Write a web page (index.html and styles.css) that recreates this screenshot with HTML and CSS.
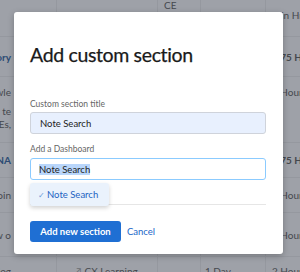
FILE: index.html
```html
<!DOCTYPE html>
<html>
<head>
<meta charset="utf-8">
<link rel="stylesheet" href="styles.css">
</head>
<body>
<div class="table">
  <div class="cell"></div>
  <div class="cell"></div>
  <div class="cell"><span class="hd">CE</span></div>
  <div class="cell"></div>
  <div class="cell"><span class="hd2">Min Hrs</span></div>

  <div class="cell c1"><span class="link">Category</span></div>
  <div class="cell"></div>
  <div class="cell"></div>
  <div class="cell"></div>
  <div class="cell c5"><span class="bold">1.75 Hrs</span></div>

  <div class="cell c1 multi"><span>Knowle</span><span>Learn te</span><span>CEs,</span></div>
  <div class="cell"></div>
  <div class="cell"></div>
  <div class="cell"></div>
  <div class="cell c5 top"><span>2 Hours</span></div>

  <div class="cell c1"><span class="link">NA</span></div>
  <div class="cell"></div>
  <div class="cell"></div>
  <div class="cell"></div>
  <div class="cell c5"><span class="bold">1.75 Hrs</span></div>

  <div class="cell c1"><span>Join</span></div>
  <div class="cell"></div>
  <div class="cell"></div>
  <div class="cell"></div>
  <div class="cell c5"><span>2 Hours</span></div>

  <div class="cell c1"><span>How o</span></div>
  <div class="cell"></div>
  <div class="cell"></div>
  <div class="cell"></div>
  <div class="cell c5"><span>2 Hours</span></div>

  <div class="cell c1 last"><span>Go to blog</span></div>
  <div class="cell c2 last"><span class="ico">&#8599;</span><span>CX Learning</span></div>
  <div class="cell last"></div>
  <div class="cell c4 last"><span>1 Day</span></div>
  <div class="cell c5 last"><span>2 Hours</span></div>
</div>

<div class="modal">
  <h1 class="title">Add custom section</h1>
  <label class="label">Custom section title</label>
  <div class="input filled">Note Search</div>
  <label class="label label2">Add a Dashboard</label>
  <div class="input focused"><span class="sel">Note Search</span></div>
  <div class="menu-wrap">
    <div class="divider"></div>
    <div class="menu"><span class="check">&#10003;</span>Note Search</div>
  </div>
  <div class="actions">
    <button class="btn">Add new section</button>
    <a class="cancel">Cancel</a>
  </div>
</div>
</body>
</html>
```

FILE: styles.css
```css
html, body {
  margin: 0;
  padding: 0;
}
body {
  width: 300px;
  height: 272px;
  overflow: hidden;
  position: relative;
  background: #9ea1a8;
  font-family: Lato, "Liberation Sans", sans-serif;
}
.table {
  display: grid;
  margin-left: -40px;
  grid-template-columns: 97px 101px 43px 65px 80px;
  grid-template-rows: 37px 40px 66px 35px 35px 44px 40px;
}
.cell {
  border-right: 1px solid #95989f;
  border-bottom: 1px solid #95989f;
  font-size: 10px;
  color: #45484e;
  display: flex;
  align-items: center;
  padding-left: 6px;
  overflow: hidden;
  white-space: nowrap;
}
.c1 { justify-content: flex-end; padding-right: 45px; padding-left: 0; }
.multi { flex-direction: column; align-items: flex-end; justify-content: flex-start; padding-top: 9px; line-height: 13px; }
.multi span:first-child { margin-bottom: 6px; }
.top { align-items: flex-start; padding-top: 9px; }
.hd { align-self: flex-start; margin-top: -1px; }
.hd2 { margin-left: 0; align-self: flex-start; margin-top: 9px; }
.link { color: #2d4c74; font-weight: 700; }
.bold { font-weight: 700; }
.last { align-items: flex-start; padding-top: 8px; border-bottom: none; }
.c2 { padding-left: 17px; }
.c4 { padding-left: 4px; }
.ico { margin-right: 3px; color: #6a6d73; }

.modal {
  position: absolute;
  left: 14px;
  top: 12px;
  width: 269px;
  height: 242px;
  background: #fff;
  border-radius: 3px;
  box-shadow: 0 2px 6px rgba(0,0,0,0.25);
  box-sizing: border-box;
  padding: 0 17px 0 16px;
}
.title {
  margin: 30px 0 0;
  font-size: 19.5px;
  line-height: 26px;
  font-weight: 400;
  color: #1a1a1a;
  letter-spacing: -0.35px;
  -webkit-text-stroke: 0.25px #1a1a1a;
}
.label {
  display: block;
  margin-top: 31px;
  font-size: 8.5px;
  line-height: 11px;
  color: #666;
}
.label2 { margin-top: 10px; }
.input {
  margin-top: 2px;
  height: 22px;
  box-sizing: border-box;
  border-radius: 3px;
  font-size: 9.5px;
  display: flex;
  align-items: center;
  padding-left: 9px;
  color: #222;
}
.filled {
  background: #e8f0fe;
  border: 1px solid #cfd3db;
}
.focused {
  border: 1.5px solid #8bcbff;
  padding-left: 8px;
  margin-top: 3px;
}
.sel {
  background: #b9d6fb;
}
.menu-wrap {
  position: relative;
  height: 25px;
}
.divider {
  position: absolute;
  left: 0;
  right: 0;
  top: 24px;
  height: 1px;
  background: #e6e6e6;
}
.menu {
  position: absolute;
  left: 0;
  top: 3px;
  width: 79px;
  height: 23px;
  box-sizing: border-box;
  background: #eaf2fc;
  border-radius: 3px;
  box-shadow: 0 2px 4px rgba(0,0,0,0.18);
  font-size: 9.5px;
  color: #1d62c2;
  display: flex;
  align-items: center;
  padding-left: 8px;
}
.check {
  font-size: 8px;
  color: #6b9ad8;
  margin-right: 2px;
}
.actions {
  margin-top: 16px;
  display: flex;
  align-items: center;
  gap: 6px;
}
.btn {
  width: 91px;
  height: 21px;
  border: none;
  border-radius: 3px;
  background: #1f6fd3;
  color: #fff;
  font-family: Lato, "Liberation Sans", sans-serif;
  font-weight: 700;
  font-size: 9.5px;
  padding: 0;
}
.cancel {
  font-size: 9.5px;
  color: #2066c8;
}
```
